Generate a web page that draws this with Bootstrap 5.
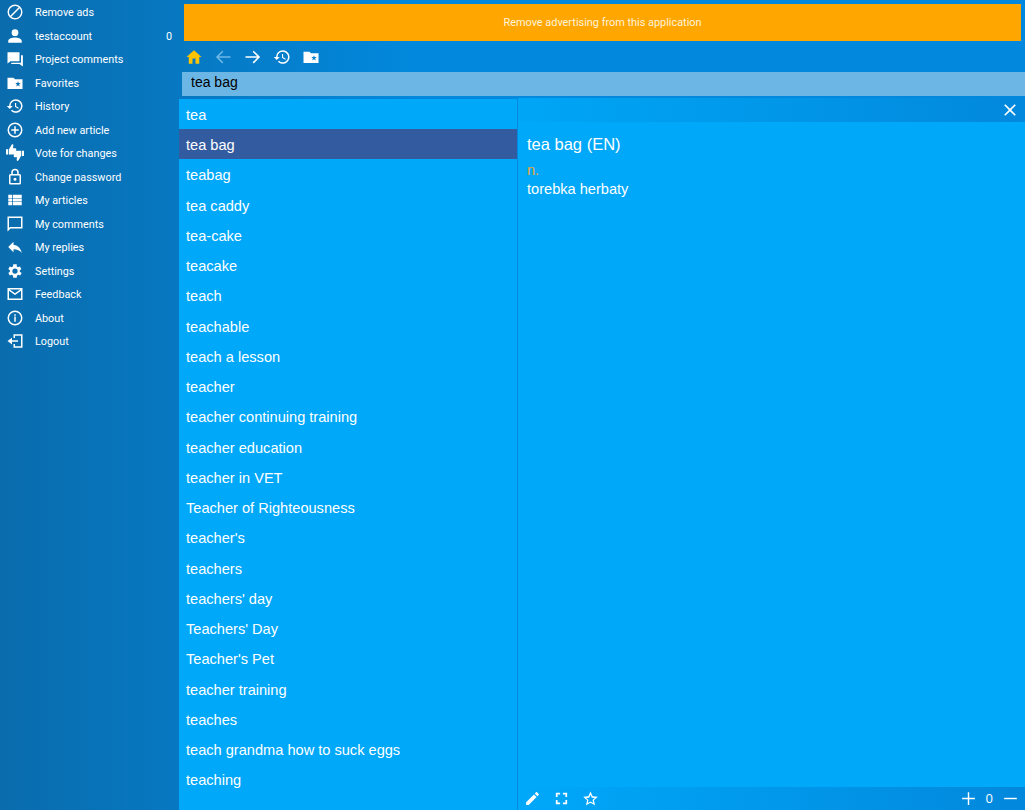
<!DOCTYPE html>
<html lang="en">
<head>
  <meta charset="UTF-8" />
  <meta name="viewport" content="width=device-width, initial-scale=1.0"/>
  <title>Dictionary</title>
  <link href="https://cdn.jsdelivr.net/npm/bootstrap@5.3.3/dist/css/bootstrap.min.css" rel="stylesheet">
  <style>
    html, body { height: 100%; }
    body { margin: 0; height: 810px; overflow: hidden; color: #fff; background: linear-gradient(90deg, #0a6cad 0%, #0288dc 40%, #0288dc 100%); font-family: "Liberation Sans", Arial, sans-serif; }
    svg { fill: currentColor; display: block; }
    .side-pane { width: 179px; flex: none; padding-top: .5px; font-family: "Roboto", "Open Sans", sans-serif; font-size: 10.8px; }
    .side-row { height: 23.5px; padding: 0 7px 0 6px; gap: 11px; color: #fff; text-decoration: none; }
    .side-row svg { width: 18px; height: 18px; flex: none; }
    .side-row span { padding-top: 2px; }
    .main-pane { min-width: 0; }
    .ad-banner { margin: 4px 4px 0 5px; height: 37px; padding-top: 2px; background: #ffa600; font-family: "Roboto", "Open Sans", sans-serif; font-size: 10.9px; color: #fff3dc; }
    .tool-row { height: 31px; padding-left: 6px; gap: 11.25px; }
    .tool-row svg { width: 18px; height: 18px; }
    .search-box { margin: 0 2px 0 3px; height: 24px; padding: 0 9px 5px; border: 0; border-radius: 0; background: #6cb6e6; font-size: 14px; color: #000; }
    .word-list { width: 338px; flex: none; margin-top: 2.8px; background: #00a8fa; border-radius: 0; }
    .word-list .list-group-item { height: 30.25px; padding: 1px 7px 0; border: 0; border-radius: 0; background: transparent; color: #fff; font-size: 14.6px; line-height: 30.25px; white-space: nowrap; }
    .word-list .list-group-item.active { margin-top: 0; background: #335ca0; }
    .detail-pane { margin-left: 1px; margin-top: 2px; background: #00a8fa; min-width: 0; }
    .detail-top { height: 24px; background: linear-gradient(90deg, #00a6f6, #0288dc); padding-right: 8px; }
    .detail-top svg { width: 14px; height: 14px; }
    .detail-body { padding: 12px 9px; font-size: 14.6px; line-height: 20px; }
    .detail-title { font-size: 16.5px; line-height: 20px; margin-bottom: 7px; }
    .part-speech { color: #e8a83c; line-height: 18px; }
    .detail-foot { height: 23px; padding: 0 6.5px 0 6px; background: linear-gradient(90deg, #00a8fa, #0288dc); }
    .detail-foot svg { width: 17px; height: 17px; }
    .foot-left { gap: 12px; }
    .foot-right { gap: 8.5px; font-family: "Open Sans", sans-serif; font-size: 13px; }
  </style>
</head>
<body>
<div class="d-flex h-100">
  <!-- Left menu -->
  <nav class="side-pane d-flex flex-column">
    <a class="side-row d-flex align-items-center"><svg viewBox="0 0 24 24"><path d="M12 2a10 10 0 1 0 0 20 10 10 0 0 0 0-20zM4 12a8 8 0 0 1 12.900-6.300L5.700 16.900A8 8 0 0 1 4 12zm8 8a8 8 0 0 1-4.900-1.700L18.300 7.100A8 8 0 0 1 12 20z"/></svg><span>Remove ads</span></a>
    <a class="side-row d-flex align-items-center"><svg viewBox="0 0 24 24"><path d="M12 12a4.500 4.500 0 1 0 0-9 4.500 4.500 0 0 0 0 9zm0 2c-3.200 0-9 1.600-9 4.500V21h18v-2.500c0-2.900-5.800-4.500-9-4.500z"/></svg><span class="flex-grow-1">testaccount</span><span>0</span></a>
    <a class="side-row d-flex align-items-center"><svg viewBox="0 0 24 24"><path d="M2 3h16v12H6l-4 3zM20 7h2.500v15L18 18.500H7V17h13z"/></svg><span>Project comments</span></a>
    <a class="side-row d-flex align-items-center"><svg viewBox="0 0 24 24"><path fill-rule="evenodd" d="M2 5h8l2 2h10v13H2zM16 9.500l-.9 2.600h-2.800l2.200 1.700-.8 2.700 2.300-1.600 2.300 1.600-.8-2.700 2.200-1.700h-2.800z"/></svg><span>Favorites</span></a>
    <a class="side-row d-flex align-items-center"><svg viewBox="0 0 24 24"><path d="M13 3a9 9 0 0 0-9 9H1l4 4 4-4H6a7 7 0 1 1 2 4.900l-1.400 1.400A9 9 0 1 0 13 3zm-1 5v5l4.300 2.500.7-1.200-3.500-2.100V8z"/></svg><span>History</span></a>
    <a class="side-row d-flex align-items-center"><svg viewBox="0 0 24 24"><path d="M12 2a10 10 0 1 0 0 20 10 10 0 0 0 0-20zm0 18a8 8 0 1 1 0-16 8 8 0 0 1 0 16zm1-13h-2v4H7v2h4v4h2v-4h4v-2h-4z"/></svg><span>Add new article</span></a>
    <a class="side-row d-flex align-items-center"><svg viewBox="0 0 24 24"><path d="M0 7h3v7H0zM4 7l3.500-6C8.500 0 10 .5 9.800 2l-.5 3.500h3.200c1 0 1.500 1 1.200 1.800L12 13c-.2.600-.7 1-1.300 1H4z"/><path transform="rotate(180 12 11.500)" d="M0 7h3v7H0zM4 7l3.500-6C8.500 0 10 .5 9.800 2l-.5 3.500h3.200c1 0 1.500 1 1.200 1.800L12 13c-.2.600-.7 1-1.300 1H4z"/></svg><span>Vote for changes</span></a>
    <a class="side-row d-flex align-items-center"><svg viewBox="0 0 24 24"><path d="M18 8h-1V6a5 5 0 0 0-10 0v2H6a2 2 0 0 0-2 2v10a2 2 0 0 0 2 2h12a2 2 0 0 0 2-2V10a2 2 0 0 0-2-2zM9 6a3 3 0 0 1 6 0v2H9zm9 14H6V10h12zm-6-3a2 2 0 1 0 0-4 2 2 0 0 0 0 4z"/></svg><span>Change password</span></a>
    <a class="side-row d-flex align-items-center"><svg viewBox="0 0 24 24"><path d="M3 5h5v4.200H3zM9 5h12v4.200H9zM3 10h5v4H3zM9 10h12v4H9zM3 14.800h5V19H3zM9 14.800h12V19H9z"/></svg><span>My articles</span></a>
    <a class="side-row d-flex align-items-center"><svg viewBox="0 0 24 24"><path d="M22 2H2v20l4-4h16zm-2 14H5.200L4 17.200V4h16z"/></svg><span>My comments</span></a>
    <a class="side-row d-flex align-items-center"><svg viewBox="0 0 24 24"><path d="M10 9V5l-7 7 7 7v-4.100c5 0 8.500 1.600 11 5.100-1-5-4-10-11-11z"/></svg><span>My replies</span></a>
    <a class="side-row d-flex align-items-center"><svg viewBox="0 0 24 24"><path d="M19.400 13a7.500 7.500 0 0 0 0-2l2.100-1.600-2-3.500-2.500 1a7.500 7.500 0 0 0-1.700-1L15.300 3h-4.600l-.4 2.900a7.500 7.500 0 0 0-1.700 1l-2.500-1-2 3.500L6.200 11a7.500 7.500 0 0 0 0 2l-2.100 1.600 2 3.500 2.500-1a7.500 7.500 0 0 0 1.700 1l.4 2.900h4.600l.4-2.900a7.500 7.500 0 0 0 1.700-1l2.500 1 2-3.500zM13 15.500a3.500 3.500 0 1 1 0-7 3.500 3.500 0 0 1 0 7z" transform="translate(-1 0)"/></svg><span>Settings</span></a>
    <a class="side-row d-flex align-items-center"><svg viewBox="0 0 24 24"><path d="M2 4v16h20V4zm17 2-7 5-7-5zM4 18V7.500l8 5.700 8-5.700V18z"/></svg><span>Feedback</span></a>
    <a class="side-row d-flex align-items-center"><svg viewBox="0 0 24 24"><path d="M12 2a10 10 0 1 0 0 20 10 10 0 0 0 0-20zm0 18a8 8 0 1 1 0-16 8 8 0 0 1 0 16zm-1-10h2v7h-2zm0-3h2v2h-2z"/></svg><span>About</span></a>
    <a class="side-row d-flex align-items-center"><svg viewBox="0 0 24 24"><path d="M10 3h12v18H10v-5h2v3h8V5h-8v3h-2zM8 7.500V11h8v2H8v3.500L2 12z"/></svg><span>Logout</span></a>
  </nav>

  <main class="main-pane flex-grow-1 d-flex flex-column">
    <div class="ad-banner d-flex align-items-center justify-content-center">Remove advertising from this application</div>
    <div class="tool-row d-flex align-items-center">
      <svg viewBox="0 0 24 24" style="color:#ffc400"><path d="M10 21v-7h4v7h5v-9h3L12 3 2 12h3v9z"/></svg>
      <svg viewBox="0 0 24 24" style="color:#6cb6e6"><path d="M22 11H6.500l6-6L11 3.500 2.500 12l8.500 8.500 1.500-1.500-6-6H22z"/></svg>
      <svg viewBox="0 0 24 24"><path d="M2 11h15.500l-6-6L13 3.500l8.500 8.500-8.500 8.500-1.500-1.500 6-6H2z"/></svg>
      <svg viewBox="0 0 24 24"><path d="M13 3a9 9 0 0 0-9 9H1l4 4 4-4H6a7 7 0 1 1 2 4.900l-1.400 1.400A9 9 0 1 0 13 3zm-1 5v5l4.300 2.500.7-1.200-3.500-2.100V8z"/></svg>
      <svg viewBox="0 0 24 24"><path fill-rule="evenodd" d="M2 5h8l2 2h10v13H2zM16 9.500l-.9 2.600h-2.800l2.200 1.700-.8 2.700 2.300-1.600 2.300 1.600-.8-2.700 2.200-1.700h-2.800z"/></svg>
    </div>
    <input class="search-box form-control shadow-none" type="text" value="tea bag">
    <div class="d-flex flex-grow-1" style="min-height:0">
      <div class="word-list list-group">
        <div class="list-group-item">tea</div>
        <div class="list-group-item active">tea bag</div>
        <div class="list-group-item">teabag</div>
        <div class="list-group-item">tea caddy</div>
        <div class="list-group-item">tea-cake</div>
        <div class="list-group-item">teacake</div>
        <div class="list-group-item">teach</div>
        <div class="list-group-item">teachable</div>
        <div class="list-group-item">teach a lesson</div>
        <div class="list-group-item">teacher</div>
        <div class="list-group-item">teacher continuing training</div>
        <div class="list-group-item">teacher education</div>
        <div class="list-group-item">teacher in VET</div>
        <div class="list-group-item">Teacher of Righteousness</div>
        <div class="list-group-item">teacher's</div>
        <div class="list-group-item">teachers</div>
        <div class="list-group-item">teachers' day</div>
        <div class="list-group-item">Teachers' Day</div>
        <div class="list-group-item">Teacher's Pet</div>
        <div class="list-group-item">teacher training</div>
        <div class="list-group-item">teaches</div>
        <div class="list-group-item">teach grandma how to suck eggs</div>
        <div class="list-group-item">teaching</div>
      </div>
      <section class="detail-pane flex-grow-1 d-flex flex-column">
        <div class="detail-top d-flex align-items-center justify-content-end">
          <svg viewBox="0 0 24 24"><path d="M22 4 20 2l-8 8-8-8-2 2 8 8-8 8 2 2 8-8 8 8 2-2-8-8z"/></svg>
        </div>
        <div class="detail-body flex-grow-1">
          <div class="detail-title">tea bag (EN)</div>
          <div class="part-speech">n.</div>
          <div>torebka herbaty</div>
        </div>
        <div class="detail-foot d-flex align-items-center justify-content-between">
          <div class="foot-left d-flex align-items-center">
            <svg viewBox="0 0 24 24"><path d="M3 17.300V21h3.700L17.800 9.900l-3.700-3.700zM20.700 7a1 1 0 0 0 0-1.400l-2.300-2.300a1 1 0 0 0-1.400 0l-1.800 1.800 3.700 3.700z"/></svg>
            <svg viewBox="0 0 24 24"><path d="M6.500 6.500H10V4H4v6h2.500zM14 4v2.500h3.500V10H20V4zM17.500 17.500H14V20h6v-6h-2.500zM6.500 14H4v6h6v-2.500H6.500z"/></svg>
            <svg viewBox="0 0 24 24"><path fill-rule="evenodd" d="M12 2l3 6.800 7.300.8-5.500 4.900 1.600 7.200-6.400-3.700-6.400 3.700 1.600-7.200-5.500-4.900 7.300-.8zM12 6.800l-1.800 4-4.300.5 3.200 2.900-.9 4.300 3.800-2.200 3.800 2.200-.9-4.300 3.200-2.900-4.300-.5z"/></svg>
          </div>
          <div class="foot-right d-flex align-items-center">
            <svg viewBox="0 0 24 24"><path d="M21 11h-8V3h-2v8H3v2h8v8h2v-8h8z"/></svg>
            <span>0</span>
            <svg viewBox="0 0 24 24"><path d="M3 11h18v2H3z"/></svg>
          </div>
        </div>
      </section>
    </div>
  </main>
</div>
<script src="https://cdn.jsdelivr.net/npm/bootstrap@5.3.3/dist/js/bootstrap.bundle.min.js"></script>
</body>
</html>
